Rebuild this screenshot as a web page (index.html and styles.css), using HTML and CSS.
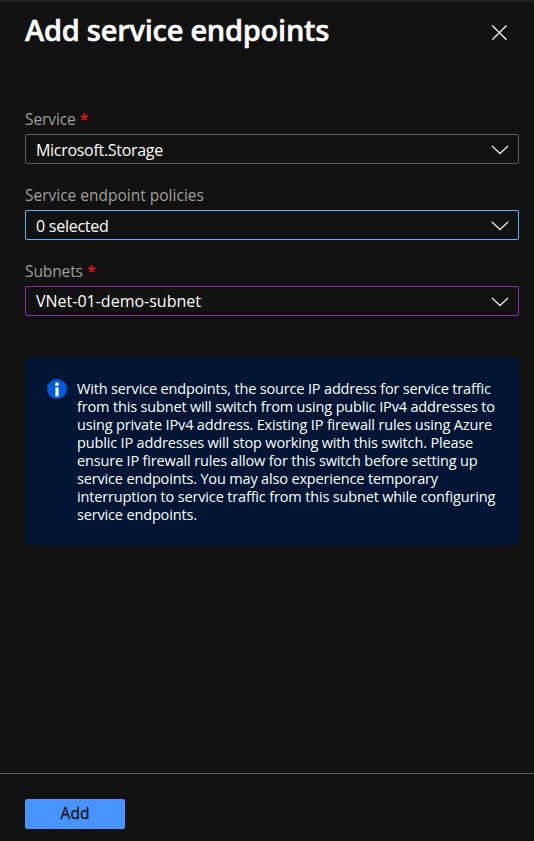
FILE: index.html
```html
<!DOCTYPE html>
<html lang="en">
<head>
<meta charset="utf-8">
<title>Add service endpoints</title>
<link rel="stylesheet" href="styles.css">
</head>
<body>
<main class="panel">
  <header class="header">
    <h1 class="title">Add service endpoints</h1>
    <button class="close" aria-label="Close">
      <svg width="16" height="16" viewBox="0 0 16 16"><path d="M1.3.5l14.2 14.2M15.5.5L1.3 14.7"/></svg>
    </button>
  </header>
  <form class="fields">
    <div class="field">
      <div class="label"><span class="label-tight">Service</span><span class="required">*</span></div>
      <div class="select"><span class="value-storage">Microsoft.Storage</span><svg class="chevron" width="18" height="10" viewBox="0 0 18 10"><path d="M1 1l8 7.5L17 1"/></svg></div>
    </div>
    <div class="field">
      <div class="label"><span>Service endpoint policies</span></div>
      <div class="select focused"><span class="value-selected">0 selected</span><svg class="chevron" width="18" height="10" viewBox="0 0 18 10"><path d="M1 1l8 7.5L17 1"/></svg></div>
    </div>
    <div class="field">
      <div class="label"><span class="label-tight">Subnets</span><span class="required">*</span></div>
      <div class="select edited"><span class="value-subnet">VNet-01-demo-subnet</span><svg class="chevron" width="18" height="10" viewBox="0 0 18 10"><path d="M1 1l8 7.5L17 1"/></svg></div>
    </div>
  </form>
  <section class="info">
    <svg class="info-icon" width="20" height="20" viewBox="0 0 20 20"><circle cx="10" cy="10" r="10" fill="#015cda"/><circle cx="10" cy="5.2" r="1.9" fill="#fff"/><path d="M8.4 8.4h3.2v9H8.4z" fill="#fff"/></svg>
    <p class="info-text">With service endpoints, the source IP address for service traffic<br>from this subnet will switch from using public IPv4 addresses to<br>using private IPv4 address. Existing IP firewall rules using Azure<br>public IP addresses will stop working with this switch. Please<br>ensure IP firewall rules allow for this switch before setting up<br>service endpoints. You may also experience temporary<br>interruption to service traffic from this subnet while configuring<br>service endpoints.</p>
  </section>
  <footer class="footer"><button class="add">Add</button></footer>
</main>
</body>
</html>
```
FILE: styles.css
```css
* { box-sizing: border-box; }
body { margin: 0; background: #111; color: #fff; font-family: "Open Sans", "Noto Sans", sans-serif; font-size: 15.5px; }
button { border: 0; padding: 0; font: inherit; }
.panel { height: 841px; display: flex; flex-direction: column; border-top: 2px solid #1e1e1e; }
.header { display: flex; justify-content: space-between; padding: 8px 27px 0 25px; height: 106px; }
.title { margin: 0; font-size: 29px; line-height: 40px; font-weight: 600; letter-spacing: -0.25px; white-space: nowrap; -webkit-text-stroke: 0.5px #fff; }
.close { align-self: flex-start; margin-top: 15px; width: 16px; height: 16px; background: none; }
.close svg { display: block; fill: none; stroke: #fff; stroke-width: 1.3; }
.fields { padding: 0 15px 0 25px; display: flex; flex-direction: column; gap: 20px; }
.field { height: 56px; }
.label { height: 26px; line-height: 22px; color: #a19f9d; display: flex; gap: 4px; white-space: nowrap; }
.label-tight { letter-spacing: -0.1px; }
.required { color: #e81123; font-size: 16px; line-height: 22px; font-weight: 600; }
.select { height: 30px; border: 1px solid #605e5c; border-radius: 2px; padding: 1px 9px 0 10px; display: flex; align-items: center; justify-content: space-between; white-space: nowrap; font-size: 16px; line-height: 22px; }
.focused { border-color: #55b3ff; }
.edited { border-color: #8a2da5; }
.value-storage { padding-top: 1px; letter-spacing: -0.3px; }
.value-selected { padding-top: 1px; letter-spacing: -0.25px; }
.value-subnet { padding-bottom: 2px; }
.chevron { fill: none; stroke: #e4e4e4; stroke-width: 1.4; }
.info { margin: 42px 15px 0 25px; height: 187px; background: #001433; border-radius: 2px; display: flex; gap: 10px; padding: 21px 0 0 22px; }
.info-icon { flex: none; }
.info-text { margin: 1px 0 0; font-size: 14.5px; line-height: 18px; letter-spacing: -0.16px; white-space: nowrap; }
.footer { margin-top: auto; height: 68px; border-top: 1px solid #605e5c; padding: 25px; }
.add { display: block; width: 100px; height: 30px; border-radius: 2px; padding-bottom: 2px; background: #4894fe; color: #111; font-size: 15.5px; -webkit-text-stroke: 0.3px #111; }
```
